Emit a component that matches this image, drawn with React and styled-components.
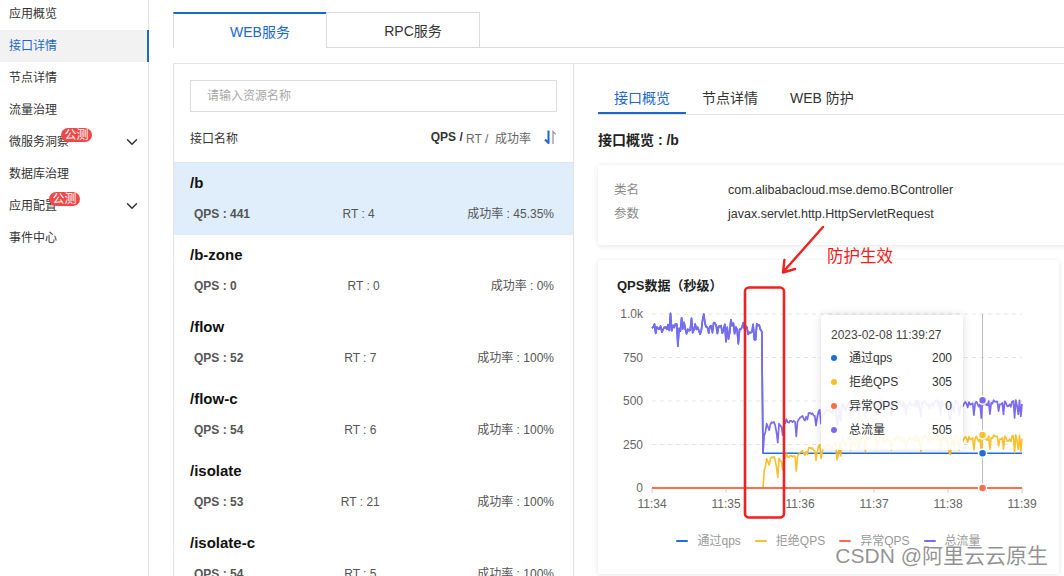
import React from "react";
import styled, { createGlobalStyle } from "styled-components";
import { ChevronDown } from "lucide-react";

const BLUE = "#1B67CC";
const C_PASS = "#1E6FD9";
const C_REJECT = "#F9C02C";
const C_ERR = "#FF6C4C";
const C_TOTAL = "#7A6AF2";

const GlobalStyle = createGlobalStyle`
  html, body { margin: 0; padding: 0; background: #fff; }
  body { font-family: "Liberation Sans", "Noto Sans CJK SC", sans-serif; color: #333; }
  * { box-sizing: border-box; }
`;

const Root = styled.div`
  position: relative;
  width: 1064px;
  height: 576px;
  overflow: hidden;
  display: flex;
`;

const Sidebar = styled.nav`
  width: 149px;
  flex-shrink: 0;
  border-right: 1px solid #e3e3e3;
`;

const NavList = styled.div`
  margin-top: -2px;
`;

const NavItem = styled.div`
  position: relative;
  height: 32px;
  display: flex;
  align-items: center;
  justify-content: space-between;
  padding: 0 7px 0 9px;
  font-size: 12px;
  color: ${(p) => (p.$active ? BLUE : "#333")};
  background: ${(p) => (p.$active ? "#f2f2f2" : "transparent")};
  &::after {
    content: "";
    display: ${(p) => (p.$active ? "block" : "none")};
    position: absolute;
    right: -1px;
    top: 0;
    bottom: 0;
    width: 2px;
    background: ${BLUE};
  }
`;

const NavLabel = styled.span`
  position: relative;
  display: inline-block;
  line-height: 16px;
`;

const Badge = styled.span`
  position: absolute;
  left: calc(100% - 8px);
  top: -6px;
  height: 14px;
  padding: 0 3.5px;
  border-radius: 7px;
  background: #ef4848;
  color: #fff;
  font-size: 12px;
  line-height: 14px;
  white-space: nowrap;
`;

const Main = styled.main`
  flex: 1;
  min-width: 0;
  padding: 12px 0 0 24px;
`;

const TabRow = styled.div`
  display: flex;
  height: 36px;
`;

const ServiceTab = styled.div`
  width: ${(p) => (p.$active ? 153 : 154)}px;
  height: 36px;
  padding-left: 20px;
  display: flex;
  align-items: center;
  justify-content: center;
  font-size: 14px;
  background: #fff;
  color: ${(p) => (p.$active ? BLUE : "#333")};
  border-top: ${(p) => (p.$active ? `2px solid ${BLUE}` : "1px solid #dcdcdc")};
  border-left: 1px solid #dcdcdc;
  border-right: ${(p) => (p.$active ? "none" : "1px solid #dcdcdc")};
  border-bottom: ${(p) => (p.$active ? "none" : "1px solid #dcdcdc")};
`;

const TabFill = styled.div`
  flex: 1;
  border-bottom: 1px solid #dcdcdc;
`;

const Panel = styled.section`
  margin-top: 15px;
  width: 920px;
  height: 620px;
  display: flex;
  border: 1px solid #e3e3e3;
`;

const ListCol = styled.div`
  width: 400px;
  flex-shrink: 0;
  border-right: 1px solid #e3e3e3;
`;

const SearchWrap = styled.div`
  padding: 16px 16px 0;
`;

const SearchInput = styled.input`
  display: block;
  width: 100%;
  height: 32px;
  border: 1px solid #dcdcdc;
  padding: 0 16px;
  font-family: inherit;
  font-size: 12px;
  color: #333;
  outline: none;
  &::placeholder { color: #a8a8a8; }
`;

const ListHeader = styled.div`
  height: 51px;
  display: flex;
  align-items: center;
  justify-content: space-between;
  padding: 0 16px;
  border-bottom: 1px solid #e3e3e3;
  font-size: 12px;
  color: #333;
`;

const SortGroup = styled.div`
  display: flex;
  align-items: center;
  color: #666;
  white-space: pre;
`;

const SortStrong = styled.b`
  color: #333;
`;

const SortIcon = styled.svg`
  margin-left: 12px;
  display: block;
`;

const Item = styled.div`
  height: 72px;
  padding: 10px 16px 11px;
  background: ${(p) => (p.$selected ? "#e0eefb" : "transparent")};
`;

const ItemTitle = styled.div`
  font-size: 15px;
  font-weight: bold;
  line-height: 20px;
  color: #111;
`;

const StatsRow = styled.div`
  margin-top: 11px;
  display: flex;
  justify-content: space-between;
  padding: 0 3px 0 4px;
  font-size: 12px;
  line-height: 20px;
  color: #555;
  white-space: pre;
`;

const Stat = styled.span`
  font-weight: ${(p) => (p.$strong ? "bold" : "normal")};
`;

const DetailCol = styled.div`
  flex: 1;
  min-width: 0;
  padding: 16px 24px 0;
`;

const DetailTabs = styled.div`
  display: flex;
  border-bottom: 1px solid #e3e3e3;
`;

const DetailTab = styled.div`
  height: 34px;
  padding: 0 16px;
  display: flex;
  align-items: center;
  font-size: 14px;
  color: ${(p) => (p.$active ? BLUE : "#333")};
  box-shadow: ${(p) => (p.$active ? `inset 0 -2px 0 ${BLUE}` : "none")};
`;

const OverviewTitle = styled.h3`
  margin: 15px 0 0;
  font-size: 14px;
  font-weight: bold;
  line-height: 20px;
  color: #222;
`;

const Card = styled.div`
  background: #fff;
  box-shadow: 0 1px 5px rgba(0, 0, 0, 0.11);
  border-radius: 2px;
`;

const InfoCard = styled(Card)`
  margin-top: 15px;
  padding: 13px 16px 19px;
`;

const InfoRow = styled.div`
  display: flex;
  line-height: 24px;
  font-size: 12.5px;
`;

const InfoLabel = styled.span`
  width: 114px;
  flex-shrink: 0;
  color: #888;
`;

const InfoValue = styled.span`
  color: #333;
`;

const ChartCard = styled(Card)`
  position: relative;
  margin-top: 15px;
  width: 461px;
  padding: 16px 0 23px;
`;

const ChartTitle = styled.div`
  padding-left: 19px;
  font-size: 13px;
  font-weight: bold;
  line-height: 20px;
  color: #222;
`;

const ChartSvg = styled.svg`
  display: block;
  font-family: "Liberation Sans", "Noto Sans CJK SC", sans-serif;
`;

const Legend = styled.div`
  margin-top: 15px;
  display: flex;
  justify-content: center;
  gap: 14px;
  font-size: 12px;
  line-height: 20px;
  color: #999;
`;

const LegendItem = styled.div`
  display: flex;
  align-items: center;
  gap: 9px;
`;

const LegendMark = styled.i`
  width: 12px;
  height: 2px;
  border-radius: 1px;
  background: ${(p) => p.$color};
`;

const Tooltip = styled.div`
  position: absolute;
  left: 223px;
  top: 55px;
  width: 142px;
  padding: 10px 11px 8px 10px;
  background: rgba(255, 255, 255, 0.9);
  box-shadow: 0 0 8px rgba(0, 0, 0, 0.15);
  border-radius: 4px;
  font-size: 12px;
  color: #333;
`;

const TipTitle = styled.div`
  line-height: 21px;
  color: #444;
`;

const TipRow = styled.div`
  display: flex;
  align-items: center;
  line-height: 24px;
`;

const TipDot = styled.i`
  width: 6px;
  height: 6px;
  border-radius: 50%;
  margin-right: 12px;
  background: ${(p) => p.$color};
`;

const TipLabel = styled.span`
  flex: 1;
`;

const Watermark = styled.div`
  position: absolute;
  right: 16px;
  bottom: 8px;
  font-size: 21px;
  line-height: 24px;
  color: rgba(128, 128, 128, 0.85);
  text-shadow: 0 0 2px #fff;
  white-space: pre;
`;

const AnnotationLayer = styled.svg`
  position: absolute;
  left: 0;
  top: 0;
  pointer-events: none;
`;

const AnnotationText = styled.div`
  position: absolute;
  left: 827px;
  top: 246px;
  font-size: 16.5px;
  line-height: 20px;
  color: #f02020;
`;

/* ---------- data ---------- */

const navItems = [
  { label: "应用概览" },
  { label: "接口详情", active: true },
  { label: "节点详情" },
  { label: "流量治理" },
  { label: "微服务洞察", badge: "公测", expand: true },
  { label: "数据库治理" },
  { label: "应用配置", badge: "公测", expand: true },
  { label: "事件中心" },
];

const endpoints = [
  { name: "/b", qps: 441, rt: 4, rate: "45.35%", selected: true },
  { name: "/b-zone", qps: 0, rt: 0, rate: "0%" },
  { name: "/flow", qps: 52, rt: 7, rate: "100%" },
  { name: "/flow-c", qps: 54, rt: 6, rate: "100%" },
  { name: "/isolate", qps: 53, rt: 21, rate: "100%" },
  { name: "/isolate-c", qps: 54, rt: 5, rate: "100%" },
];

function makeRng(seed) {
  let s = seed;
  return () => {
    s |= 0;
    s = (s + 0x6d2b79f5) | 0;
    let t = Math.imul(s ^ (s >>> 15), 1 | s);
    t = (t + Math.imul(t ^ (t >>> 7), 61 | t)) ^ t;
    return ((t ^ (t >>> 14)) >>> 0) / 4294967296;
  };
}

const X0 = 54;
const PX_PER_S = 370 / 300;
const yOf = (v) => 192 - v * 0.174;
const xOf = (t) => X0 + t * PX_PER_S;
const CROSS_T = 268;

const series = (() => {
  const r = makeRng(11);
  const total = [];
  const pass = [];
  const reject = [];
  for (let t = 0; t <= 300; t++) {
    let v;
    if (t < 90) {
      v = 918 + (r() - 0.5) * 70;
      if (r() < 0.12) v += (r() < 0.5 ? -1 : 1) * (40 + r() * 65);
      v = Math.min(1025, Math.max(805, v));
    } else if (t === 90) {
      v = 200;
    } else {
      const base = 345 + Math.min(1, (t - 91) / 75) * 140;
      v = base + (r() - 0.5) * 45;
      if (r() < 0.1) v -= 35 + r() * 55;
      if (t === 91) v = 300;
    }
    if (t === CROSS_T) v = 505;
    total.push(v);
    pass.push(t < 90 ? v : 200);
    reject.push(t < 90 ? 0 : v - 200);
  }
  const toPath = (arr) =>
    arr.map((v, i) => `${i ? "L" : "M"}${xOf(i).toFixed(1)} ${yOf(v).toFixed(1)}`).join(" ");
  return {
    total: toPath(total),
    pass: toPath(pass),
    reject: toPath(reject),
    err: `M${X0} ${yOf(0)} L${xOf(300)} ${yOf(0)}`,
  };
})();

const yTicks = [
  { v: 0, label: "0" },
  { v: 250, label: "250" },
  { v: 500, label: "500" },
  { v: 750, label: "750" },
  { v: 1000, label: "1.0k" },
];
const xTicks = ["11:34", "11:35", "11:36", "11:37", "11:38", "11:39"];

const legend = [
  { label: "通过qps", color: C_PASS },
  { label: "拒绝QPS", color: C_REJECT },
  { label: "异常QPS", color: C_ERR },
  { label: "总流量", color: C_TOTAL },
];

const tipRows = [
  { label: "通过qps", value: 200, color: C_PASS },
  { label: "拒绝QPS", value: 305, color: C_REJECT },
  { label: "异常QPS", value: 0, color: C_ERR },
  { label: "总流量", value: 505, color: C_TOTAL },
];

function QpsChart() {
  const cx = xOf(CROSS_T);
  return (
    <ChartSvg width="461" height="220" viewBox="0 0 461 220">
      {yTicks.map((t) =>
        t.v > 0 ? (
          <line key={t.v} x1={X0} x2={xOf(300)} y1={yOf(t.v)} y2={yOf(t.v)} stroke="#e4e4e4" strokeDasharray="4 4" />
        ) : null
      )}
      {yTicks.map((t) => (
        <text key={"l" + t.v} x="45" y={yOf(t.v)} textAnchor="end" dominantBaseline="central" fontSize="12" fill="#666">
          {t.label}
        </text>
      ))}
      <line x1={X0} x2={xOf(300)} y1="192" y2="192" stroke="#ccc" />
      {xTicks.map((l, i) => (
        <g key={l}>
          <line x1={X0 + i * 74} x2={X0 + i * 74} y1="192" y2="197" stroke="#ccc" />
          <text x={X0 + i * 74} y="208" textAnchor="middle" dominantBaseline="central" fontSize="12" fill="#666">
            {l}
          </text>
        </g>
      ))}
      <line x1={cx} x2={cx} y1="18" y2="192" stroke="#bbb" />
      <path d={series.pass} fill="none" stroke={C_PASS} strokeWidth="1.6" strokeLinejoin="round" />
      <path d={series.reject} fill="none" stroke={C_REJECT} strokeWidth="1.6" strokeLinejoin="round" />
      <path d={series.err} fill="none" stroke={C_ERR} strokeWidth="2" />
      <path d={series.total} fill="none" stroke={C_TOTAL} strokeWidth="1.7" strokeLinejoin="round" />
      {[
        [505, C_TOTAL],
        [305, C_REJECT],
        [200, C_PASS],
        [0, C_ERR],
      ].map(([v, c]) => (
        <circle key={c} cx={cx} cy={yOf(v)} r="4" fill={c} stroke="#fff" strokeWidth="1.5" />
      ))}
    </ChartSvg>
  );
}

export default function App() {
  return (
    <Root>
      <GlobalStyle />
      <Sidebar>
        <NavList>
          {navItems.map((n) => (
            <NavItem key={n.label} $active={n.active}>
              <NavLabel>
                {n.label}
                {n.badge && <Badge>{n.badge}</Badge>}
              </NavLabel>
              {n.expand && <ChevronDown size={18} strokeWidth={2} color="#333" />}
            </NavItem>
          ))}
        </NavList>
      </Sidebar>

      <Main>
        <TabRow>
          <ServiceTab $active>WEB服务</ServiceTab>
          <ServiceTab>RPC服务</ServiceTab>
          <TabFill />
        </TabRow>

        <Panel>
          <ListCol>
            <SearchWrap>
              <SearchInput placeholder="请输入资源名称" />
            </SearchWrap>
            <ListHeader>
              <span>接口名称</span>
              <SortGroup>
                <SortStrong>QPS / </SortStrong>RT /  成功率
                <SortIcon width="14" height="16" viewBox="0 0 14 16">
                  <path d="M5.5 1.5 V14 L2 10.5" fill="none" stroke={BLUE} strokeWidth="2" strokeLinejoin="round" />
                  <path d="M10 15 V2.5 L12.8 5.3" fill="none" stroke="#999" strokeWidth="1.3" />
                </SortIcon>
              </SortGroup>
            </ListHeader>
            {endpoints.map((e) => (
              <Item key={e.name} $selected={e.selected}>
                <ItemTitle>{e.name}</ItemTitle>
                <StatsRow>
                  <Stat $strong>QPS : {e.qps}</Stat>
                  <Stat>RT : {e.rt}</Stat>
                  <Stat>成功率 : {e.rate}</Stat>
                </StatsRow>
              </Item>
            ))}
          </ListCol>

          <DetailCol>
            <DetailTabs>
              <DetailTab $active>接口概览</DetailTab>
              <DetailTab>节点详情</DetailTab>
              <DetailTab>WEB 防护</DetailTab>
            </DetailTabs>
            <OverviewTitle>接口概览 : /b</OverviewTitle>
            <InfoCard>
              <InfoRow>
                <InfoLabel>类名</InfoLabel>
                <InfoValue>com.alibabacloud.mse.demo.BController</InfoValue>
              </InfoRow>
              <InfoRow>
                <InfoLabel>参数</InfoLabel>
                <InfoValue>javax.servlet.http.HttpServletRequest</InfoValue>
              </InfoRow>
            </InfoCard>
            <ChartCard>
              <ChartTitle>QPS数据（秒级）</ChartTitle>
              <QpsChart />
              <Legend>
                {legend.map((l) => (
                  <LegendItem key={l.label}>
                    <LegendMark $color={l.color} />
                    {l.label}
                  </LegendItem>
                ))}
              </Legend>
              <Tooltip>
                <TipTitle>2023-02-08 11:39:27</TipTitle>
                {tipRows.map((r) => (
                  <TipRow key={r.label}>
                    <TipDot $color={r.color} />
                    <TipLabel>{r.label}</TipLabel>
                    <span>{r.value}</span>
                  </TipRow>
                ))}
              </Tooltip>
            </ChartCard>
          </DetailCol>
        </Panel>
      </Main>

      <AnnotationLayer width="1064" height="576" viewBox="0 0 1064 576">
        <rect x="745" y="287.5" width="39" height="230" rx="4" fill="none" stroke="#ee2222" strokeWidth="2.6" />
        <path d="M823 227 L784 271 M784.4 260 L783 272.5 L795 269" fill="none" stroke="#ee2222" strokeWidth="2.4" strokeLinecap="round" strokeLinejoin="round" />
      </AnnotationLayer>
      <AnnotationText>防护生效</AnnotationText>
      <Watermark>CSDN @阿里云云原生</Watermark>
    </Root>
  );
}
